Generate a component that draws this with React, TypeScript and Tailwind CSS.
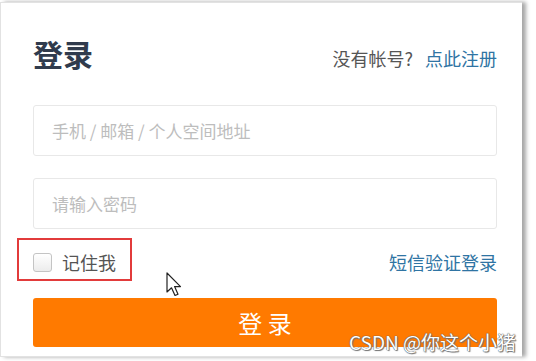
export default function App() {
    return (
        <div className="relative h-[361px] w-[536px] overflow-hidden bg-white font-['Noto_Sans_CJK_SC','Noto_Sans',sans-serif]">
            {/* card */}
            <div className="mt-[2px] h-[355px] w-[522px] border-t border-b border-l border-[#e2e2e2] bg-white shadow-[4px_0_4px_rgba(0,0,0,0.35)] pl-[32px] pr-[25px] pt-[34px]">
                <div className="flex items-end justify-between">
                    <h1 className="text-[30px] leading-[32px] font-bold text-[#303b4d]">登录</h1>
                    <p className="mb-[1px] text-[18px] leading-[20px] text-[#555]">
                        没有帐号?<span className="ml-[12px] text-[#2f74a3]">点此注册</span>
                    </p>
                </div>

                <div className="mt-[36px] flex h-[51px] items-center rounded-[3px] border border-[#e8e8e8] pl-[18px] text-[17px] text-[#bdbdbd]">
                    手机 / 邮箱 / 个人空间地址
                </div>
                <div className="mt-[22px] flex h-[51px] items-center rounded-[3px] border border-[#e8e8e8] pl-[18px] text-[17px] text-[#bdbdbd]">
                    请输入密码
                </div>

                <div className="mt-[12px] flex h-[43px] items-center justify-between">
                    <label className="relative flex items-center gap-[10px] text-[18px] text-[#555]">
                        <span className="h-[19px] w-[19px] rounded-[3px] border border-[#c4c4c4] bg-gradient-to-b from-white to-[#ececec]"></span>
                        记住我
                        <span className="absolute -left-[16px] -top-[11px] h-[43px] w-[115px] border-2 border-[#e23b3b]"></span>
                    </label>
                    <a className="text-[18px] text-[#2f74a3]">短信验证登录</a>
                </div>

                <button className="mt-[14px] flex h-[49px] w-full items-center justify-center rounded-[3px] bg-[#ff7a00] text-[24px] text-white">
                    登 录
                </button>
            </div>

            {/* mouse cursor */}
            <svg className="absolute left-[166px] top-[272px]" width="18" height="26" viewBox="0 0 18 26">
                <path d="M1 1 L1 20 L5.5 15.8 L9 23.5 L12 22.2 L8.6 14.6 L14.5 14.6 Z" fill="#fff" stroke="#222" strokeWidth="1.2" strokeLinejoin="round" />
            </svg>

            {/* watermark */}
            <div className="absolute left-[349px] top-[328px] text-[19px] text-white [text-shadow:0_0_1px_#555,0_0_1px_#555,1px_1px_1px_#777]">
                CSDN @你这个小猪
            </div>
        </div>
    );
}
